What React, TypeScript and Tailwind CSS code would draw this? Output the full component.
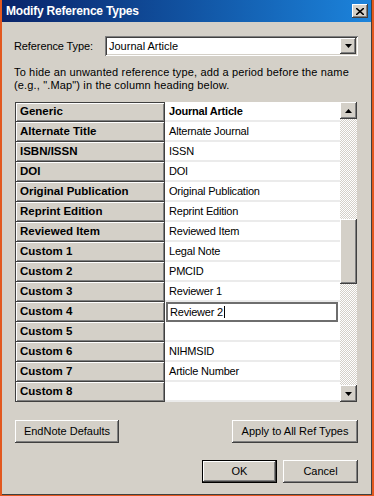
import React from 'react';

const rows = [
  { label: 'Generic', value: 'Journal Article', bold: true },
  { label: 'Alternate Title', value: 'Alternate Journal' },
  { label: 'ISBN/ISSN', value: 'ISSN' },
  { label: 'DOI', value: 'DOI' },
  { label: 'Original Publication', value: 'Original Publication' },
  { label: 'Reprint Edition', value: 'Reprint Edition' },
  { label: 'Reviewed Item', value: 'Reviewed Item' },
  { label: 'Custom 1', value: 'Legal Note' },
  { label: 'Custom 2', value: 'PMCID' },
  { label: 'Custom 3', value: 'Reviewer 1' },
  { label: 'Custom 4', value: 'Reviewer 2', editing: true },
  { label: 'Custom 5', value: '' },
  { label: 'Custom 6', value: 'NIHMSID' },
  { label: 'Custom 7', value: 'Article Number' },
  { label: 'Custom 8', value: '' },
];

const raised =
  'bg-[#d4d0c8] shadow-[inset_-1px_-1px_#404040,inset_1px_1px_#ffffff,inset_-2px_-2px_#808080,inset_2px_2px_#d4d0c8]';

const Arrow = ({ up }: { up?: boolean }) => (
  <svg width="7" height="4" viewBox="0 0 7 4">
    <path d={up ? 'M3.5 0 L7 4 L0 4 Z' : 'M0 0 L7 0 L3.5 4 Z'} fill="#000" />
  </svg>
);

const Button = ({ label, width, isDefault }: { label: string; width: string; isDefault?: boolean }) => (
  <div className={`${width} h-[23px] ${isDefault ? 'border border-black' : ''}`}>
    <div className={`${raised} w-full h-full flex items-center justify-center text-[11px]`}>
      {label}
    </div>
  </div>
);

const App = () => {
  return (
    <div
      className="w-[374px] h-[496px] bg-[#e2581f] pl-[2px] pr-[2px] pb-[1px] flex flex-col text-black"
      style={{ fontFamily: '"Liberation Sans", Arial, sans-serif' }}
    >
      <div className="flex-1 bg-[#d4d0c8] border-r border-b border-[#404040] flex flex-col">
        {/* title bar */}
        <div className="h-[22px] bg-gradient-to-r from-[#0a246a] to-[#1c84dc] flex items-center pl-[4px] pr-[3px]">
          <span className="text-white font-bold text-[12px] tracking-[-0.2px] flex-1">Modify Reference Types</span>
          <div className={`${raised} w-[16px] h-[14px] flex items-center justify-center`}>
            <svg width="8" height="7" viewBox="0 0 8 7">
              <path d="M0 0 L8 7 M8 0 L0 7" stroke="#000" strokeWidth="1.6" />
            </svg>
          </div>
        </div>

        <div className="pl-[12px] pr-[13px] flex flex-col">
          {/* reference type */}
          <div className="flex items-center mt-[14px] h-[20px]">
            <span className="text-[11px] tracking-[-0.1px] w-[91px]">Reference Type:</span>
            <div className="flex-1 h-[20px] bg-white shadow-[inset_1px_1px_#808080,inset_-1px_-1px_#ffffff,inset_2px_2px_#404040,inset_-2px_-2px_#d4d0c8] flex items-center pl-[4px] pr-[2px]">
              <span className="flex-1 text-[11px]">Journal Article</span>
              <div className={`${raised} w-[16px] h-[16px] flex items-center justify-center`}>
                <Arrow />
              </div>
            </div>
          </div>

          <p className="mt-[10px] text-[11px] leading-[13px] tracking-[0.15px] whitespace-nowrap">
            To hide an unwanted reference type, add a period before the name
            <br />
            (e.g., ".Map") in the column heading below.
          </p>

          {/* table */}
          <div className="mt-[10px] ml-[1px] flex h-[300px]">
            <div className="w-[150px] flex flex-col">
              {rows.map((r) => (
                <div
                  key={r.label}
                  className="h-[20px] bg-[#d4d0c8] border border-[#404040] border-t-0 first:border-t shadow-[inset_1px_1px_#ffffff,inset_-1px_-1px_#808080] flex items-center pl-[4px] text-[11.5px] font-bold"
                >
                  {r.label}
                </div>
              ))}
            </div>
            <div className="w-[175px] flex flex-col bg-white">
              {rows.map((r) =>
                r.editing ? (
                  <div key={r.label} className="h-[20px] pl-[1px] pr-[2px]">
                    <div className="h-full border-2 border-[#6e6e6e] flex items-center pl-[2px] text-[11px] tracking-[-0.2px]">
                      {r.value}
                      <span className="inline-block w-px h-[12px] bg-black ml-[1px]" />
                    </div>
                  </div>
                ) : (
                  <div
                    key={r.label}
                    className={`h-[20px] border-b-2 border-[#ebebeb] flex items-center pl-[4px] text-[11px] tracking-[-0.2px] ${r.bold ? 'font-bold' : ''}`}
                  >
                    {r.value}
                  </div>
                )
              )}
            </div>
            <div className="w-[17px] flex flex-col bg-[repeating-conic-gradient(#d4d0c8_0%_25%,#ffffff_0%_50%)] bg-[length:2px_2px]">
              <div className={`${raised} h-[17px] flex items-center justify-center`}>
                <Arrow up />
              </div>
              <div className="h-[100px]" />
              <div className={`${raised} h-[65px]`} />
              <div className="flex-1" />
              <div className={`${raised} h-[17px] flex items-center justify-center`}>
                <Arrow />
              </div>
            </div>
          </div>

          {/* buttons */}
          <div className="mt-[18px] ml-[1px] flex justify-between">
            <Button label="EndNote Defaults" width="w-[104px]" />
            <Button label="Apply to All Ref Types" width="w-[126px]" />
          </div>
          <div className="mt-[17px] flex justify-end gap-[6px]">
            <Button label="OK" width="w-[75px]" isDefault />
            <Button label="Cancel" width="w-[75px]" />
          </div>
        </div>
      </div>
    </div>
  );
};

export default App;
